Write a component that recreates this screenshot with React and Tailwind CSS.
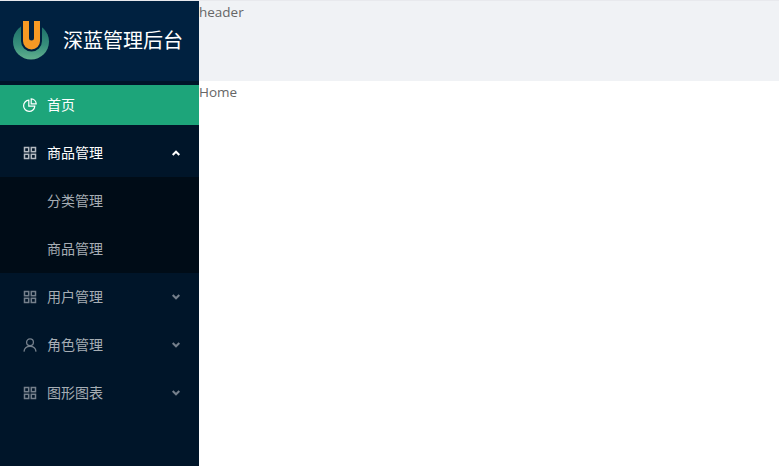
import React from 'react';

const Logo = () => (
    <svg width="38" height="40" viewBox="0 0 38 40" className="shrink-0">
        <defs>
            <linearGradient id="ring" x1="0" y1="0" x2="0" y2="1">
                <stop offset="0" stopColor="#1a6b66" />
                <stop offset="0.6" stopColor="#378f7c" />
                <stop offset="1" stopColor="#62b08e" />
            </linearGradient>
        </defs>
        <circle cx="18" cy="20.5" r="18" fill="url(#ring)" />
        <path d="M8 0H29V20A10.5 10.5 0 0 1 8 20Z" fill="#002140" />
        <path d="M10 0H16V17A2.5 2.5 0 0 0 21 17V0H27V20A8.5 8.5 0 0 1 10 20Z" fill="#f79a24" />
    </svg>
);

const PieIcon = () => (
    <svg width="14" height="14" viewBox="0 0 14 14" fill="none" stroke="currentColor" strokeWidth="1.2" className="mr-[10px] shrink-0">
        <path d="M5.8 2.2A5.6 5.6 0 1 0 11.8 8.2H5.8Z" />
        <path d="M8.2 0.8A5.2 5.2 0 0 1 13.2 5.8H8.2Z" />
    </svg>
);

const GridIcon = ({ className }) => (
    <svg width="14" height="14" viewBox="0 0 14 14" fill="none" stroke="currentColor" strokeWidth="1.5" className={`mr-[10px] shrink-0 ${className}`}>
        <rect x="1.5" y="1.5" width="4.2" height="4.2" />
        <rect x="8.3" y="1.5" width="4.2" height="4.2" />
        <rect x="1.5" y="8.3" width="4.2" height="4.2" />
        <rect x="8.3" y="8.3" width="4.2" height="4.2" />
    </svg>
);

const UserIcon = ({ className }) => (
    <svg width="14" height="14" viewBox="0 0 14 14" fill="none" stroke="currentColor" strokeWidth="1.3" className={`mr-[10px] shrink-0 ${className}`}>
        <circle cx="7" cy="4.3" r="3.4" />
        <path d="M1 13.6C1.3 10.4 3.6 8.4 7 8.4S12.7 10.4 13 13.6" />
    </svg>
);

const Chevron = ({ up, className }) => (
    <svg width="8" height="6" viewBox="0 0 8 6" fill="none" stroke="currentColor" strokeWidth="2" className={`shrink-0 ${className}`}>
        <path d={up ? 'M0.7 5L4 1.7L7.3 5' : 'M0.7 1L4 4.3L7.3 1'} />
    </svg>
);

const MenuItem = ({ icon: Icon, label, open }) => (
    <div className={`h-12 flex items-center pl-[23px] pr-[19px] text-[14px] ${open ? 'text-white' : 'text-[#a6adb4]'}`}>
        <Icon className={open ? 'text-[#b4bac1]' : 'text-[#75808c]'} />
        <span className="flex-1 pb-[2px]">{label}</span>
        <Chevron up={open} className={open ? 'text-white' : 'text-[#75808c]'} />
    </div>
);

const SubItem = ({ label }) => (
    <div className="h-12 flex items-center pl-[47px] pb-[2px] text-[14px] text-[#a6adb4]">{label}</div>
);

export default function App() {
    return (
        <div
            className="h-[466px] w-[779px] flex overflow-hidden bg-white border-t border-[#e8e9ed] text-[#666666]"
            style={{ fontFamily: '"Open Sans", "Noto Sans CJK SC", sans-serif' }}
        >
            <aside className="w-[199px] shrink-0 bg-[#001529] flex flex-col">
                <div className="h-[80px] shrink-0 bg-[#002140] flex items-center pl-[13px]">
                    <Logo />
                    <span className="ml-[12px] text-[20px] text-white whitespace-nowrap">深蓝管理后台</span>
                </div>
                <div className="mt-1 mb-1 h-10 bg-[#1da57a] flex items-center pl-[23px] text-[14px] text-white">
                    <PieIcon />
                    <span className="pb-[2px]">首页</span>
                </div>
                <MenuItem icon={GridIcon} label="商品管理" open />
                <div className="bg-[#000c17]">
                    <SubItem label="分类管理" />
                    <SubItem label="商品管理" />
                </div>
                <MenuItem icon={GridIcon} label="用户管理" />
                <MenuItem icon={UserIcon} label="角色管理" />
                <MenuItem icon={GridIcon} label="图形图表" />
            </aside>
            <main className="flex-1 flex flex-col text-[13.5px] leading-[22px]">
                <div className="h-[80px] bg-[#f0f2f5]">header</div>
                <div>Home</div>
            </main>
        </div>
    );
}
